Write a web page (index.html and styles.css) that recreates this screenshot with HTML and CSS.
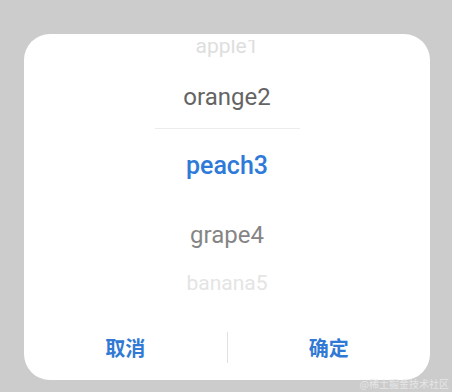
FILE: index.html
```html
<!DOCTYPE html>
<html lang="zh">
<head>
<meta charset="utf-8">
<link rel="stylesheet" href="styles.css">
</head>
<body>
<div class="dialog">
  <div class="picker">
    <div class="row far top">apple1</div>
    <div class="row near first">orange2</div>
    <div class="line"></div>
    <div class="row selected">peach3</div>
    <div class="row near second">grape4</div>
    <div class="row far bottom">banana5</div>
  </div>
  <div class="actions">
    <button class="btn">取消</button>
    <div class="sep"></div>
    <button class="btn">确定</button>
  </div>
</div>
<div class="watermark">@稀土掘金技术社区</div>
</body>
</html>
```
FILE: styles.css
```css
html, body {
  margin: 0;
  padding: 0;
}
body {
  background: #cccccc;
  width: 452px;
  height: 392px;
  overflow: hidden;
  position: relative;
  font-family: Roboto, "Noto Sans CJK SC", sans-serif;
}
.dialog {
  margin: 34px 22px 0 24px;
  height: 346px;
  box-sizing: border-box;
  background: #ffffff;
  border-radius: 26px;
  padding-top: 6px;
  display: flex;
  flex-direction: column;
}
.picker {
  height: 251px;
  overflow: hidden;
  display: flex;
  flex-direction: column;
  align-items: center;
}
.row {
  display: flex;
  align-items: center;
  justify-content: center;
  flex: none;
  white-space: nowrap;
}
.far {
  font-size: 21px;
  height: 28px;
}
.far.top {
  margin-top: -8px;
  color: #dedede;
}
.far.bottom {
  color: #e4e4e4;
}
.near {
  font-size: 24px;
}
.near.first {
  margin-top: 6px;
  height: 62px;
  color: #646464;
}
.near.second {
  height: 68px;
  color: #858585;
}
.line {
  width: 145px;
  height: 1px;
  background: #ececec;
  flex: none;
}
.selected {
  height: 72px;
  font-size: 25px;
  font-weight: 500;
  color: #2e7ad9;
}
.actions {
  margin-top: 32px;
  height: 48px;
  display: flex;
  align-items: center;
}
.btn {
  flex: 1;
  height: 48px;
  border: 0;
  background: transparent;
  padding: 0;
  font-family: "Noto Sans CJK SC", sans-serif;
  font-size: 20px;
  font-weight: 700;
  color: #3079d4;
}
.sep {
  width: 1px;
  height: 31px;
  background: #e0e0e0;
}
.watermark {
  position: absolute;
  right: 3px;
  bottom: 1px;
  font-family: "Noto Sans CJK SC", sans-serif;
  font-size: 10px;
  color: #e6e6e6;
  line-height: 14px;
}
```
